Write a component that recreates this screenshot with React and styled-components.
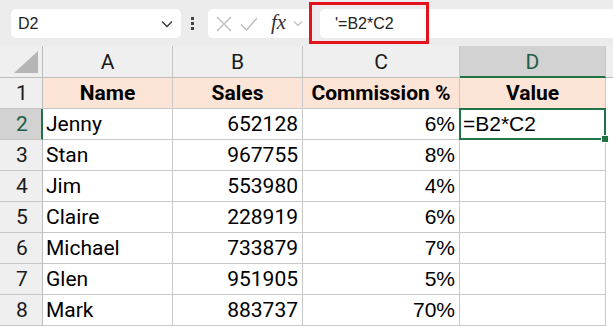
import styled, { createGlobalStyle } from 'styled-components';

const GlobalStyle = createGlobalStyle`
  html, body {
    margin: 0;
    padding: 0;
    background: #ffffff;
    overflow: hidden;
  }
`;

const COLS = [
  { key: 'A', label: 'Name', align: 'left', font: 'sans' },
  { key: 'B', label: 'Sales', align: 'right', font: 'sans' },
  { key: 'C', label: 'Commission %', align: 'right', font: 'arial' },
  { key: 'D', label: 'Value', align: 'left', font: 'arial' },
];

const ROWS = [
  ['Jenny', '652128', '6%', '=B2*C2'],
  ['Stan', '967755', '8%', ''],
  ['Jim', '553980', '4%', ''],
  ['Claire', '228919', '6%', ''],
  ['Michael', '733879', '7%', ''],
  ['Glen', '951905', '5%', ''],
  ['Mark', '883737', '70%', ''],
];

const GREEN = '#217346';

export default function App() {
  return (
    <Page>
      <GlobalStyle />
      <Toolbar>
        <NameBox>
          <span>D2</span>
          <svg width="12" height="8" viewBox="0 0 12 8">
            <path d="M1 1.5 L6 6.5 L11 1.5" fill="none" stroke="#333" strokeWidth="1.3" />
          </svg>
        </NameBox>
        <Dots>
          <i />
          <i />
          <i />
        </Dots>
        <Controls>
          <svg width="18" height="18" viewBox="0 0 18 18">
            <path d="M2 2 L16 16 M16 2 L2 16" stroke="#bdbdbd" strokeWidth="1.4" />
          </svg>
          <svg width="18" height="18" viewBox="0 0 18 18">
            <path d="M1 9.5 L6.5 15 L17 3" fill="none" stroke="#bdbdbd" strokeWidth="1.4" />
          </svg>
          <Fx>fx</Fx>
          <svg width="10" height="7" viewBox="0 0 10 7">
            <path d="M1 1.5 L5 5.5 L9 1.5" fill="none" stroke="#bdbdbd" strokeWidth="1.2" />
          </svg>
        </Controls>
        <FormulaInput>'=B2*C2</FormulaInput>
        <Highlight />
      </Toolbar>

      <Grid>
        <Corner>
          <Triangle />
        </Corner>
        {COLS.map((c) => (
          <ColHead key={c.key} $selected={c.key === 'D'}>
            {c.key}
          </ColHead>
        ))}
        <ColHead $last />

        <RowHead>1</RowHead>
        {COLS.map((c) => (
          <TitleCell key={c.key}>{c.label}</TitleCell>
        ))}
        <Cell $last />

        {ROWS.map((row, i) => (
          <Row key={i} num={i + 2} row={row} />
        ))}
      </Grid>
    </Page>
  );
}

function Row({ num, row }) {
  return (
    <>
      <RowHead $selected={num === 2}>{num}</RowHead>
      {row.map((v, j) => (
        <Cell
          key={j}
          $align={COLS[j].align}
          $arial={COLS[j].font === 'arial'}
          $active={num === 2 && j === 3}
        >
          {v}
          {num === 2 && j === 3 && <Handle />}
        </Cell>
      ))}
      <Cell $last />
    </>
  );
}

const Page = styled.div`
  width: 613px;
  height: 326px;
  overflow: hidden;
  font-family: Roboto, 'Liberation Sans', sans-serif;
`;

const Toolbar = styled.div`
  position: relative;
  height: 46px;
  box-sizing: border-box;
  background: #ececec;
  display: flex;
  align-items: center;
  padding: 1px 0 0 11px;
`;

const NameBox = styled.div`
  width: 170px;
  height: 29px;
  box-sizing: border-box;
  background: #fff;
  border-radius: 5px;
  display: flex;
  align-items: center;
  justify-content: space-between;
  padding: 0 8px 0 7px;
  font-family: 'Liberation Sans', Arial, sans-serif;
  font-size: 16px;
  color: #222;
`;

const Dots = styled.div`
  width: 4px;
  margin: 0 13px 0 10px;
  display: flex;
  flex-direction: column;
  gap: 2px;

  i {
    display: block;
    width: 3px;
    height: 3px;
    background: #444;
  }
`;

const Controls = styled.div`
  width: 104px;
  height: 29px;
  box-sizing: border-box;
  background: #fff;
  border-radius: 5px;
  display: flex;
  align-items: center;
  gap: 7px;
  padding-left: 7px;
`;

const Fx = styled.span`
  font-family: 'Liberation Serif', 'Times New Roman', serif;
  font-style: italic;
  font-size: 21px;
  color: #333;
  margin: 0 0 3px 6px;
`;

const FormulaInput = styled.div`
  flex: 1;
  height: 29px;
  margin-left: 8px;
  background: #fff;
  border-radius: 5px 0 0 5px;
  display: flex;
  align-items: center;
  padding-left: 15px;
  font-family: 'Liberation Sans', Arial, sans-serif;
  font-size: 16px;
  color: #222;
`;

const Highlight = styled.div`
  position: absolute;
  left: 309px;
  top: 2px;
  width: 120px;
  height: 42px;
  box-sizing: border-box;
  border: 3px solid #e3131b;
`;

const Grid = styled.div`
  display: grid;
  grid-template-columns: 43px 130px 130px 157px 146px 1fr;
  grid-template-rows: 32px repeat(8, 31px);
`;

const Corner = styled.div`
  background: #efefef;
  border-right: 1px solid #bdbdbd;
  border-bottom: 1px solid #bdbdbd;
  display: flex;
  align-items: flex-end;
  justify-content: flex-end;
  padding: 0 4px 4px 0;
`;

const Triangle = styled.div`
  width: 24px;
  height: 22px;
  background: #b5b5b5;
  clip-path: polygon(100% 0, 100% 100%, 0 100%);
`;

const ColHead = styled.div`
  box-sizing: border-box;
  background: ${(p) => (p.$selected ? '#d2d2d2' : '#efefef')};
  border-right: ${(p) => (p.$last ? 'none' : '1px solid #c6c6c6')};
  border-bottom: ${(p) =>
    p.$selected ? `2px solid ${GREEN}` : '1px solid #bdbdbd'};
  color: ${(p) => (p.$selected ? '#1d5f45' : '#1a1a1a')};
  display: flex;
  align-items: center;
  justify-content: center;
  font-size: 21px;
  padding-top: ${(p) => (p.$selected ? '1px' : '0')};
`;

const RowHead = styled.div`
  box-sizing: border-box;
  background: ${(p) => (p.$selected ? '#d2d2d2' : '#efefef')};
  border-right: ${(p) =>
    p.$selected ? `2px solid ${GREEN}` : '1px solid #bdbdbd'};
  border-bottom: 1px solid #c6c6c6;
  color: ${(p) => (p.$selected ? '#1d5f45' : '#1a1a1a')};
  display: flex;
  align-items: center;
  justify-content: center;
  font-size: 21px;
  padding-left: ${(p) => (p.$selected ? '3px' : '2px')};
`;

const TitleCell = styled.div`
  background: #fce4d6;
  border-right: 1px solid #c8c8c8;
  border-bottom: 1px solid #c8c8c8;
  display: flex;
  align-items: center;
  justify-content: center;
  font-weight: 700;
  font-size: 21px;
  color: #000;
  white-space: nowrap;
`;

const Cell = styled.div`
  position: relative;
  border-right: ${(p) => (p.$last ? 'none' : '1px solid #c8c8c8')};
  border-bottom: ${(p) => (p.$last ? 'none' : '1px solid #c8c8c8')};
  display: flex;
  align-items: center;
  justify-content: ${(p) => (p.$align === 'right' ? 'flex-end' : 'flex-start')};
  padding: 0 4px 0 3px;
  font-family: ${(p) =>
    p.$arial
      ? "'Liberation Sans', Arial, sans-serif"
      : "Roboto, 'Liberation Sans', sans-serif"};
  font-size: 21px;
  color: #000;
  white-space: nowrap;

  ${(p) =>
    p.$active &&
    `
    &::after {
      content: '';
      position: absolute;
      left: -1px;
      top: -1px;
      right: -1px;
      bottom: -1px;
      border: 2px solid ${GREEN};
      pointer-events: none;
    }
  `}
`;

const Handle = styled.span`
  position: absolute;
  right: -4px;
  bottom: -4px;
  width: 6px;
  height: 6px;
  background: ${GREEN};
  border: 1px solid #fff;
  z-index: 1;
`;
